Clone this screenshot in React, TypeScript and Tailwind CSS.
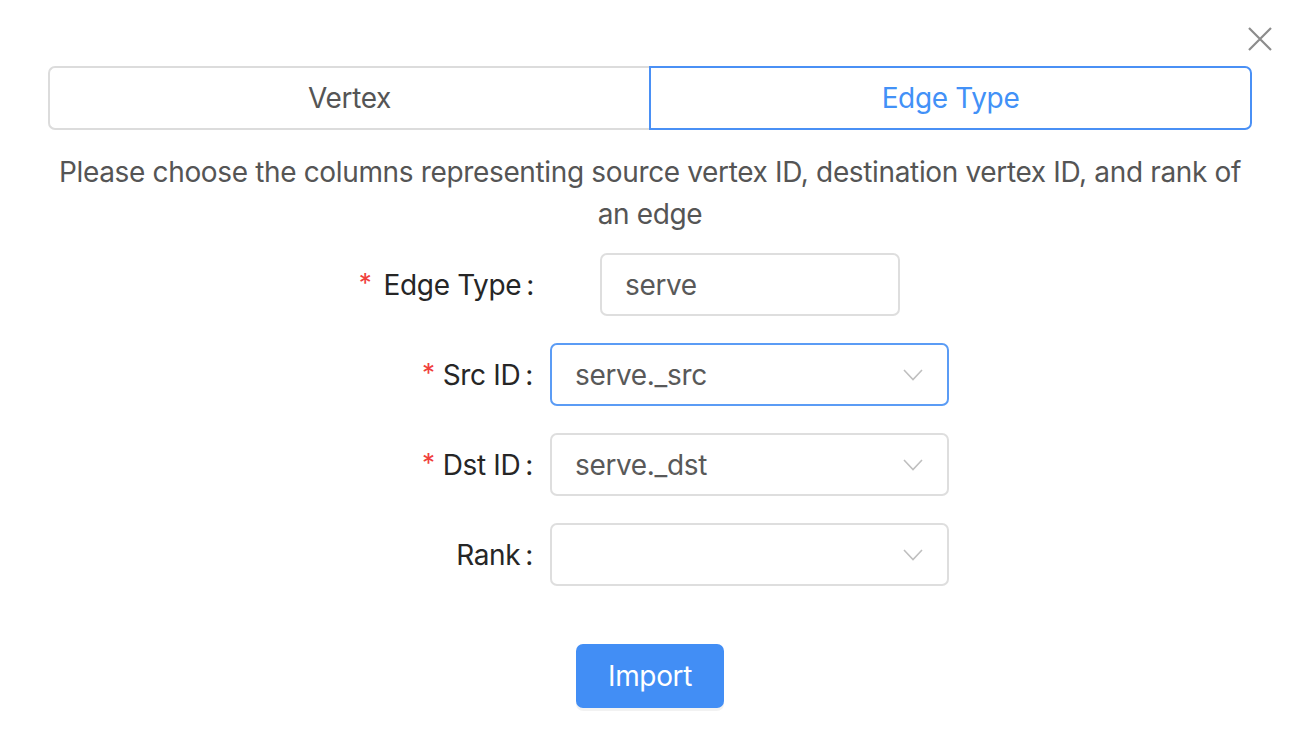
import React from "react";

const Chevron = () => (
  <svg width="20" height="12" viewBox="0 0 20 12" fill="none">
    <path d="M1 1 L10 10.5 L19 1" stroke="#bfbfbf" strokeWidth="1.6" />
  </svg>
);

function Label({ text, required, gap = 8 }: { text: string; required?: boolean; gap?: number }) {
  return (
    <div className="flex items-center justify-end text-[28px] tracking-[-0.35px] text-[#262626]">
      {required && (
        <span
          className={`text-[#f0403c] text-[26px] leading-none relative top-[-2px] ${gap === 12 ? "mr-[12px]" : "mr-[8px]"}`}
        >
          *
        </span>
      )}
      <span>{text}</span>
      <span className="ml-[5px]">:</span>
    </div>
  );
}

function Select({ value, focused }: { value?: string; focused?: boolean }) {
  return (
    <div
      className={`w-[399px] h-[63px] rounded-[7px] border-2 flex items-center justify-between pl-[23px] pr-[24px] text-[28px] tracking-[-0.35px] text-[#595959] ${
        focused ? "border-[#5b9cf5]" : "border-[#dedede]"
      }`}
    >
      <span>{value}</span>
      <Chevron />
    </div>
  );
}

export default function App() {
  return (
    <div
      className="relative w-[1300px] h-[752px] bg-white overflow-hidden"
      style={{ fontFamily: "Inter, 'Noto Sans', sans-serif" }}
    >
      <button className="absolute left-[1247px] top-[26px] w-[26px] h-[26px] flex items-center justify-center">
        <svg width="26" height="26" viewBox="0 0 26 26">
          <path d="M2 2 L24 24 M24 2 L2 24" stroke="#8c8c8c" strokeWidth="2.2" />
        </svg>
      </button>

      <div className="flex flex-col">
        <div className="mt-[66px] ml-[48px] w-[1204px] h-[64px] flex text-[28px] tracking-[-0.35px]">
          <div className="flex-1 flex items-center justify-center rounded-l-[7px] border-2 border-r-0 border-[#dcdcdc] text-[#555555]">
            Vertex
          </div>
          <div className="flex-1 flex items-center justify-center rounded-r-[7px] border-2 border-[#4a90f5] text-[#4291f7]">
            Edge Type
          </div>
        </div>

        <p className="mt-[21px] text-center text-[28px] tracking-[-0.35px] leading-[42px] text-[#555555]">
          Please choose the columns representing source vertex ID, destination vertex ID, and rank of
          <br />
          an edge
        </p>

        <div className="mt-[18px] flex items-center h-[63px]">
          <div className="w-[534px]">
            <Label text="Edge Type" required gap={12} />
          </div>
          <div className="ml-[66px] w-[300px] h-[63px] rounded-[7px] border-2 border-[#dedede] flex items-center pl-[23px] text-[28px] tracking-[-0.35px] text-[#595959]">
            serve
          </div>
        </div>

        <div className="mt-[27px] flex items-center h-[63px]">
          <div className="w-[533px]">
            <Label text="Src ID" required />
          </div>
          <div className="ml-[17px]">
            <Select value="serve._src" focused />
          </div>
        </div>

        <div className="mt-[27px] flex items-center h-[63px]">
          <div className="w-[533px]">
            <Label text="Dst ID" required />
          </div>
          <div className="ml-[17px]">
            <Select value="serve._dst" />
          </div>
        </div>

        <div className="mt-[27px] flex items-center h-[63px]">
          <div className="w-[533px]">
            <Label text="Rank" />
          </div>
          <div className="ml-[17px]">
            <Select />
          </div>
        </div>

        <div className="mt-[58px] flex justify-center">
          <button className="w-[148px] h-[64px] rounded-[7px] bg-[#428ef5] text-white text-[28px] tracking-[-0.35px] shadow-[0_3px_0_rgba(0,0,0,0.05)]">
            Import
          </button>
        </div>
      </div>
    </div>
  );
}
